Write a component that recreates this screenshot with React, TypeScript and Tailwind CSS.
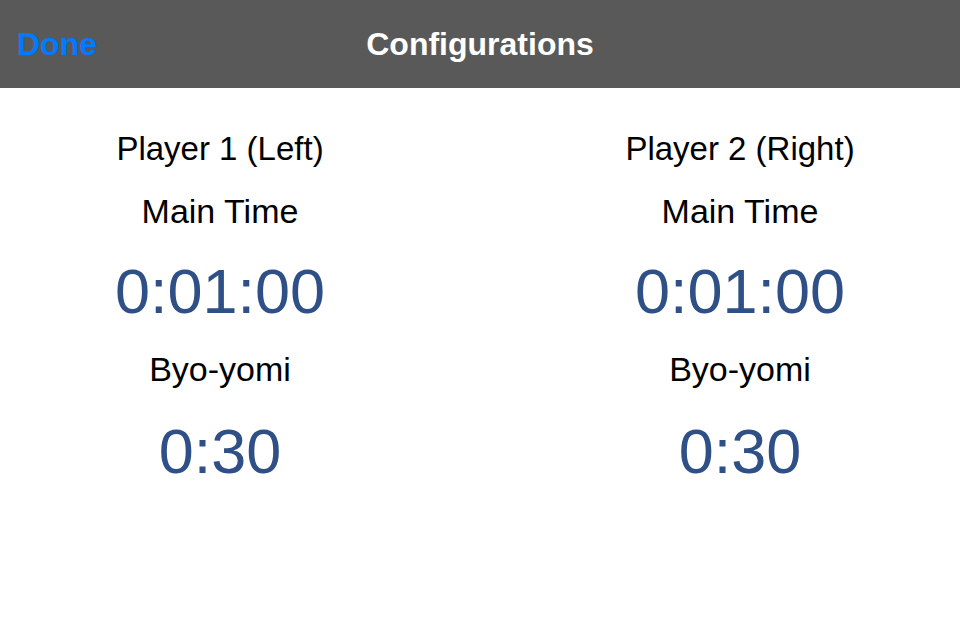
import React from "react";

function Column({ player }: { player: string }) {
  return (
    <div className="flex flex-col items-center text-black">
      <div className="mt-[41px] h-[40px] text-[33px] leading-[40px]">{player}</div>
      <div className="mt-[22px] h-[40px] text-[34px] leading-[40px]">Main Time</div>
      <div className="mt-[25px] h-[70px] text-[63px] leading-[70px] text-[#2f4f87]">0:01:00</div>
      <div className="mt-[23px] h-[40px] text-[34px] leading-[40px]">Byo-yomi</div>
      <div className="mt-[27px] h-[70px] text-[63px] leading-[70px] text-[#2f4f87]">0:30</div>
    </div>
  );
}

export default function App() {
  return (
    <div
      className="w-[960px] h-[640px] bg-white overflow-hidden"
      style={{ fontFamily: '"Liberation Sans", Arial, sans-serif' }}
    >
      <div className="relative h-[88px] bg-[#595959] flex items-center justify-center">
        <div className="absolute left-[17px] top-0 h-[88px] flex items-center text-[32px] font-bold text-[#007aff]">
          Done
        </div>
        <div className="text-[32px] font-bold text-white">Configurations</div>
      </div>
      <div className="grid grid-cols-2 gap-x-[80px]">
        <Column player="Player 1 (Left)" />
        <Column player="Player 2 (Right)" />
      </div>
    </div>
  );
}
